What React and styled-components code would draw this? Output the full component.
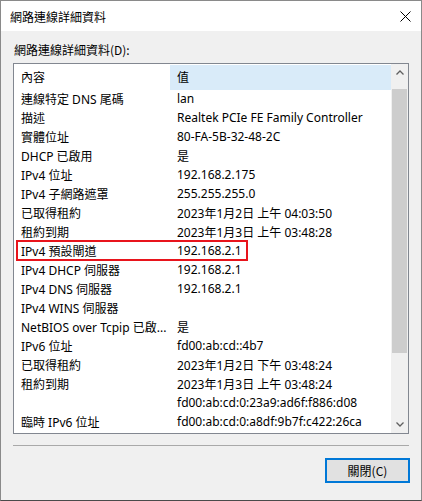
import React from "react";
import styled, { createGlobalStyle } from "styled-components";

const GlobalStyle = createGlobalStyle`
  html, body { margin: 0; padding: 0; background: #ffffff; }
  body {
    font-family: "Noto Sans", "Noto Sans CJK TC", sans-serif;
    font-size: 12px;
    color: #000;
  }
  * { box-sizing: border-box; }
`;

const Window = styled.div`
  width: 422px;
  height: 501px;
  border: 1px solid #8a8a8a;
  border-bottom-color: #4a4a4a;
  display: flex;
  flex-direction: column;
  background: #f0f0f0;
`;

const TitleBar = styled.div`
  height: 30px;
  background: #ffffff;
  display: flex;
  align-items: center;
  justify-content: space-between;
  padding: 0 10px 0 9px;
  font-family: "Noto Sans CJK TC", sans-serif;
  font-size: 12px;
`;

const CloseButton = styled.div`
  width: 12px;
  height: 12px;
  display: flex;
  align-items: center;
  justify-content: center;
`;

const Body = styled.div`
  flex: 1;
  display: flex;
  flex-direction: column;
  padding: 11px 12px 0 12px;
`;

const Label = styled.div`
  height: 16px;
  line-height: 16px;
  font-family: "Noto Sans CJK TC", sans-serif;
  padding-left: 1px;
`;

const ListBox = styled.div`
  margin-top: 5px;
  height: 371px;
  border: 1px solid #828790;
  background: #ffffff;
  display: flex;
`;

const Table = styled.div`
  flex: 1;
  display: flex;
  flex-direction: column;
  overflow: hidden;
`;

const Row = styled.div`
  position: relative;
  display: grid;
  grid-template-columns: 156px 1fr;
  height: ${(p) => (p.$header ? "25px" : "19px")};
  align-items: center;
  white-space: nowrap;
`;

const Cell = styled.div`
  height: 100%;
  display: flex;
  align-items: center;
  padding-left: 7px;
  overflow: hidden;
  background: ${(p) => (p.$active ? "#d9ebf9" : "transparent")};
  ${(p) => (p.$active ? "margin-top: 1px;" : "")}
`;

const Marker = styled.div`
  position: absolute;
  left: 2px;
  top: -1px;
  width: 232px;
  height: 21px;
  border: 2px solid #e8141c;
  pointer-events: none;
`;

const ScrollBar = styled.div`
  width: 17px;
  background: #f0f0f0;
  display: flex;
  flex-direction: column;
`;

const ArrowBox = styled.div`
  height: 17px;
  display: flex;
  align-items: center;
  justify-content: center;
`;

const Track = styled.div`
  flex: 1;
  display: flex;
  flex-direction: column;
  padding: 0 1px;
`;

const Thumb = styled.div`
  background: #cdcdcd;
`;

const Separator = styled.div`
  margin-top: 11px;
  height: 1px;
  background: #a9a9a9;
`;

const Footer = styled.div`
  display: flex;
  justify-content: flex-end;
  margin-top: 12px;
  margin-right: -1px;
`;

const Button = styled.div`
  width: 85px;
  height: 25px;
  border: 2px solid #0078d7;
  background: #e1e1e1;
  display: flex;
  align-items: center;
  justify-content: center;
  font-family: "Noto Sans CJK TC", sans-serif;
`;

const rows = [
  ["連線特定 DNS 尾碼", "lan"],
  ["描述", "Realtek PCIe FE Family Controller"],
  ["實體位址", "80-FA-5B-32-48-2C"],
  ["DHCP 已啟用", "是"],
  ["IPv4 位址", "192.168.2.175"],
  ["IPv4 子網路遮罩", "255.255.255.0"],
  ["已取得租約", "2023年1月2日 上午 04:03:50"],
  ["租約到期", "2023年1月3日 上午 03:48:28"],
  ["IPv4 預設閘道", "192.168.2.1", true],
  ["IPv4 DHCP 伺服器", "192.168.2.1"],
  ["IPv4 DNS 伺服器", "192.168.2.1"],
  ["IPv4 WINS 伺服器", ""],
  ["NetBIOS over Tcpip 已啟...", "是"],
  ["IPv6 位址", "fd00:ab:cd::4b7"],
  ["已取得租約", "2023年1月2日 下午 03:48:24"],
  ["租約到期", "2023年1月3日 上午 03:48:24"],
  ["", "fd00:ab:cd:0:23a9:ad6f:f886:d08"],
  ["臨時 IPv6 位址", "fd00:ab:cd:0:a8df:9b7f:c422:26ca"],
];

const Chevron = ({ down }) => (
  <svg width="8" height="5" viewBox="0 0 8 5">
    <polyline
      points={down ? "0.5,0.5 4,4 7.5,0.5" : "0.5,4.5 4,1 7.5,4.5"}
      fill="none"
      stroke="#606060"
      strokeWidth="1.3"
    />
  </svg>
);

export default function App() {
  return (
    <>
      <GlobalStyle />
      <Window>
        <TitleBar>
          <span>網路連線詳細資料</span>
          <CloseButton>
            <svg width="11" height="11" viewBox="0 0 11 11">
              <path d="M0.5 0.5 L10.5 10.5 M10.5 0.5 L0.5 10.5" stroke="#000" strokeWidth="1" fill="none" />
            </svg>
          </CloseButton>
        </TitleBar>
        <Body>
          <Label>網路連線詳細資料(D):</Label>
          <ListBox>
            <Table>
              <Row $header>
                <Cell>內容</Cell>
                <Cell $active>值</Cell>
              </Row>
              {rows.map(([k, v, mark], i) => (
                <Row key={i}>
                  <Cell>{k}</Cell>
                  <Cell>{v}</Cell>
                  {mark && <Marker />}
                </Row>
              ))}
            </Table>
            <ScrollBar>
              <ArrowBox>
                <Chevron />
              </ArrowBox>
              <Track>
                <Thumb style={{ marginTop: 8, height: 264 }} />
              </Track>
              <ArrowBox>
                <Chevron down />
              </ArrowBox>
            </ScrollBar>
          </ListBox>
          <Separator />
          <Footer>
            <Button>關閉(C)</Button>
          </Footer>
        </Body>
      </Window>
    </>
  );
}
